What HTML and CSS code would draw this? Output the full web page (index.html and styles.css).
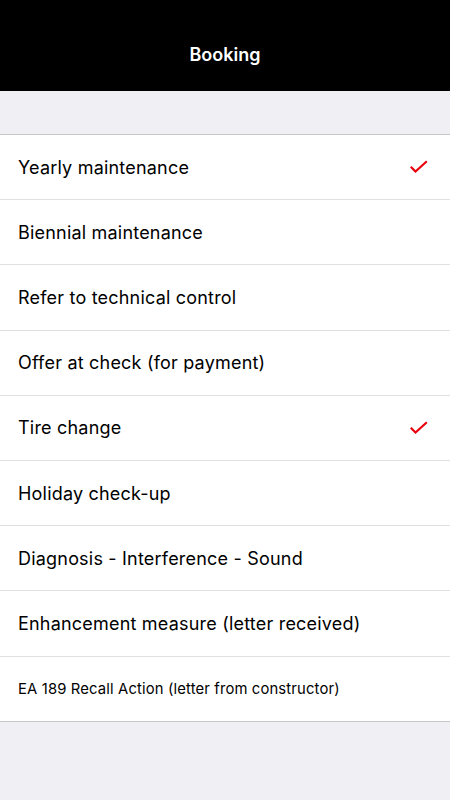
FILE: index.html
```html
<!DOCTYPE html>
<html lang="en">
<head>
    <meta charset="UTF-8">
    <meta name="viewport" content="width=device-width, initial-scale=1.0">
    <title>Booking</title>
    <link rel="stylesheet" href="styles.css">
</head>
<body>
    <div class="header">
        <h1>Booking</h1>
    </div>

    <div class="spacer"></div>

    <ul class="options">
        <li class="option selected">
            <span class="option-label">Yearly maintenance</span>
            <svg class="check" viewBox="0 0 18 14" width="18" height="14"><path d="M1.5 7.5 L5.5 11.5 L16 2"/></svg>
        </li>
        <li class="option">
            <span class="option-label">Biennial maintenance</span>
        </li>
        <li class="option">
            <span class="option-label">Refer to technical control</span>
        </li>
        <li class="option">
            <span class="option-label">Offer at check (for payment)</span>
        </li>
        <li class="option selected">
            <span class="option-label">Tire change</span>
            <svg class="check" viewBox="0 0 18 14" width="18" height="14"><path d="M1.5 7.5 L5.5 11.5 L16 2"/></svg>
        </li>
        <li class="option">
            <span class="option-label">Holiday check-up</span>
        </li>
        <li class="option">
            <span class="option-label">Diagnosis - Interference - Sound</span>
        </li>
        <li class="option">
            <span class="option-label">Enhancement measure (letter received)</span>
        </li>
        <li class="option">
            <span class="option-label small">EA 189 Recall Action (letter from constructor)</span>
        </li>
    </ul>
</body>
</html>
```
FILE: styles.css
```css
/* Reset styles */
* {
    margin: 0;
    padding: 0;
    box-sizing: border-box;
    font-family: Inter, 'Noto Sans', Arial, sans-serif;
}

body {
    background-color: #efeff4;
    color: #000;
    min-height: 800px;
}

.header {
    background-color: #000;
    height: 91px;
    padding-top: 18px;
    display: flex;
    align-items: center;
    justify-content: center;
}

.header h1 {
    font-size: 18px;
    font-weight: 600;
    color: #fff;
}

.spacer {
    height: 43px;
}

.options {
    list-style: none;
    background-color: #fff;
    border-top: 1px solid #c8c7cc;
    border-bottom: 1px solid #c8c7cc;
}

.option {
    display: flex;
    align-items: center;
    justify-content: space-between;
    height: 65.2px;
    padding: 0 22px 0 18px;
    border-bottom: 1px solid #e0e0e3;
}

.option:last-child {
    border-bottom: none;
    height: 64.2px;
}

.option-label {
    font-size: 18px;
    letter-spacing: 0.2px;
}

.option-label.small {
    font-size: 14.8px;
    letter-spacing: 0.15px;
}

.check {
    fill: none;
    stroke: #e8000d;
    stroke-width: 2.2;
    stroke-linecap: square;
}
```
